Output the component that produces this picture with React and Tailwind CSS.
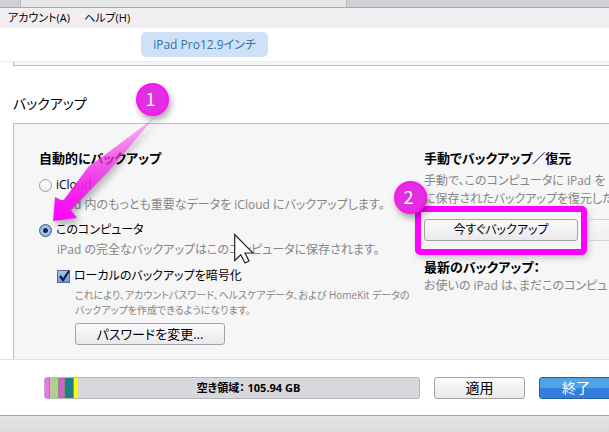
import React from 'react';

const storage = [
  { name: 'audio', className: 'w-1 bg-[#ff6bf6]' },
  { name: 'photos', className: 'w-[8px] bg-[#b3cf90]' },
  { name: 'apps', className: 'w-[5px] bg-[#d25fd6]' },
  { name: 'documents', className: 'w-[8px] bg-[#237c92]' },
  { name: 'other', className: 'w-[4px] bg-[#ffff00]' },
];

const Button = ({ className, children, ...props }) => (
  <button
    type="button"
    className={`h-[22px] rounded-[3px] border border-[#a3a3a6] bg-linear-to-b from-[#fbfafc] to-[#e9e8ea] leading-5 ${className}`}
    {...props}
  >
    {children}
  </button>
);

const Badge = ({ className, children }) => (
  <span
    className={`absolute flex size-[33px] items-center justify-center rounded-full border-2 border-[#ff10f5] bg-[#e22ee0] pr-1 pb-1 font-['Noto_Sans_CJK_JP',sans-serif] text-[18px] leading-6 text-white shadow-[2px_4px_6px_rgba(0,0,0,0.35)] ${className}`}
  >
    {children}
  </span>
);

const BackupTarget = ({ id, label, description, defaultChecked }) => (
  <div>
    <div className="flex h-5 items-center gap-1">
      <input
        type="radio"
        name="target"
        id={id}
        defaultChecked={defaultChecked}
        className="size-[13px] appearance-none rounded-full border border-[#a0a0a0] bg-linear-to-b from-white to-[#ececec] checked:border-[#3f5f8c] checked:bg-[radial-gradient(circle,#10264a_0,#10264a_2px,#a9cbf0_3px,#7fa8da_6px)]"
      />
      <label htmlFor={id}>{label}</label>
    </div>
    <p className="pl-[18px] text-[#858585]">{description}</p>
  </div>
);

const AutoBackup = () => (
  <section className="w-[385px] shrink-0">
    <h2 className="mb-[7px] text-[13px] font-bold">自動的にバックアップ</h2>
    <div className="flex flex-col gap-[5px]">
      <BackupTarget
        id="icloud"
        label="iCloud"
        description="iPad 内のもっとも重要なデータを iCloud にバックアップします。"
      />
      <BackupTarget
        id="computer"
        label="このコンピュータ"
        description="iPad の完全なバックアップはこのコンピュータに保存されます。"
        defaultChecked
      />
    </div>
    <div className="mt-[6px] pl-[18px]">
      <div className="flex h-5 items-center gap-1">
        <span className="relative size-[13px]">
          <input
            type="checkbox"
            id="encrypt"
            defaultChecked
            className="peer block size-[13px] appearance-none border border-[#52719c] bg-linear-to-b from-[#a9c6ea] to-[#7199cf]"
          />
          <svg
            viewBox="0 0 13 13"
            className="pointer-events-none absolute inset-0 hidden size-[13px] overflow-visible peer-checked:block"
          >
            <path d="M3 6l3 4L12 1" fill="none" stroke="#0c1f40" strokeWidth="2.2" />
          </svg>
        </span>
        <label htmlFor="encrypt">ローカルのバックアップを暗号化</label>
      </div>
      <div className="pl-[18px]">
        <p className="mt-[2px] text-[10px] leading-[15px] text-[#858585]">
          これにより、アカウントパスワード、ヘルスケアデータ、および HomeKit データの
          <br />
          バックアップを作成できるようになります。
        </p>
        <Button className="mt-[5px] w-[150px] text-[13px]">パスワードを変更...</Button>
      </div>
    </div>
  </section>
);

const ManualBackup = () => (
  <section className="shrink-0">
    <h2 className="mb-1 text-[13px] font-bold">手動でバックアップ／復元</h2>
    <p className="leading-[18px] text-[#858585]">
      手動で、このコンピュータに iPad を
      <br />
      に保存されたバックアップを復元した
    </p>
    <div className="mt-[11px] flex gap-[10px]">
      <div className="relative">
        <Button className="w-[154px] text-[12px]">今すぐバックアップ</Button>
        <div className="pointer-events-none absolute -inset-x-[9px] -top-[13px] -bottom-[14px] rounded-[5px] border-[6px] border-[#ff00ff] shadow-[2px_3px_6px_rgba(0,0,0,0.2)]" />
        <Badge className="-top-[38px] -left-[30px]">2</Badge>
      </div>
      <Button className="w-[154px] opacity-40" disabled aria-label="バックアップを復元" />
    </div>
    <h2 className="mt-4 text-[13px] font-bold">最新のバックアップ：</h2>
    <p className="leading-[18px] text-[#858585]">お使いの iPad は、まだこのコンピュ</p>
  </section>
);

const Pointer = () => (
  <svg
    viewBox="0 0 20 31"
    className="pointer-events-none absolute top-[233px] left-[234px] h-[31px] w-5"
  >
    <path
      d="M.7 1.5V27.5L6.8 21.8L11 30L15 28L11 20H19Z"
      fill="#fff"
      stroke="#222"
      strokeWidth="1.2"
    />
  </svg>
);

const Arrow = () => (
  <svg
    viewBox="0 0 104 108"
    className="pointer-events-none absolute top-[116px] left-[52px] h-[108px] w-[104px] overflow-visible drop-shadow-[3px_4px_3px_rgba(0,0,0,0.3)]"
  >
    <defs>
      <linearGradient id="arrow" x1="1" y1="0" x2="0" y2="1">
        <stop offset="0" stopColor="#ff30f0" stopOpacity="0.3" />
        <stop offset="0.45" stopColor="#fa35ee" stopOpacity="0.75" />
        <stop offset="0.75" stopColor="#f51bec" stopOpacity="0.95" />
        <stop offset="1" stopColor="#ff00ff" />
      </linearGradient>
    </defs>
    <path d="M102 2L54 38L37 50L11 85L3 81L1 105L25 102L19 94L56 56Z" fill="url(#arrow)" />
  </svg>
);

const App = () => {
  return (
    <div className="relative flex h-screen flex-col overflow-hidden bg-white font-['Open_Sans','Noto_Sans_CJK_JP',sans-serif] text-[12px] leading-5 whitespace-nowrap text-black [font-feature-settings:'palt']">
      <div className="flex h-2 shrink-0 border-b border-[#aaa7ae] bg-[#d1ced5]">
        <div className="ml-5 w-[327px] border-x border-[#bbb9be] bg-[#e6e6e6]" />
      </div>
      <nav className="flex h-5 shrink-0 gap-[14px] bg-[#f0eef1] pl-2 text-[11px]">
        <button type="button">アカウント(A)</button>
        <button type="button">ヘルプ(H)</button>
      </nav>
      <header className="flex h-[34px] shrink-0 items-center border-b border-[#ebebeb] pl-[141px]">
        <button
          type="button"
          className="h-[25px] w-[127px] rounded-[5px] bg-[#d0e1f7] text-[12px] text-[#2a74ad]"
        >
          iPad Pro12.9インチ
        </button>
      </header>

      <main className="flex min-h-0 flex-1 flex-col overflow-hidden pl-[13px]">
        <div className="h-1 shrink-0 border-b border-l border-[#bdbdbf] bg-[#f6f6f6]" />
        <h1 className="mt-[26px] mb-[7px] text-[14px] leading-6">バックアップ</h1>
        <div className="flex flex-1 border-t border-l border-[#bdbdbf] bg-[#f6f6f6] pt-6 pl-[25px]">
          <AutoBackup />
          <ManualBackup />
        </div>
      </main>

      <footer className="flex h-14 shrink-0 items-center gap-[14px] border-t border-[#e2e2e2] pl-11">
        <div className="flex h-[22px] flex-1 overflow-hidden rounded-[3px] border border-[#b5b5b8] bg-[#d7d7de]">
          <div className="flex gap-px bg-[#8d8f78]">
            {storage.map((item) => (
              <span key={item.name} className={item.className} />
            ))}
          </div>
          <span className="flex-1 text-center text-[11px] font-bold">
            空き領域： 105.94 GB
          </span>
        </div>
        <Button className="w-[91px] text-[14px]">適用</Button>
        <button
          type="button"
          className="-mr-1 h-[22px] w-[74px] rounded-[3px] border border-[#28619d] bg-linear-to-b from-[#4fa3e7] from-50% to-[#327fde] to-50% text-[14px] leading-5 text-white"
        >
          終了
        </button>
      </footer>
      <div className="h-[17px] shrink-0 border-t border-[#a3a3a3] bg-linear-to-b from-[#e6e2e7] to-[#dcdcdc]" />

      <Arrow />
      <Badge className="top-[83px] left-[136px]">1</Badge>
      <Pointer />
    </div>
  );
};

export default App;
